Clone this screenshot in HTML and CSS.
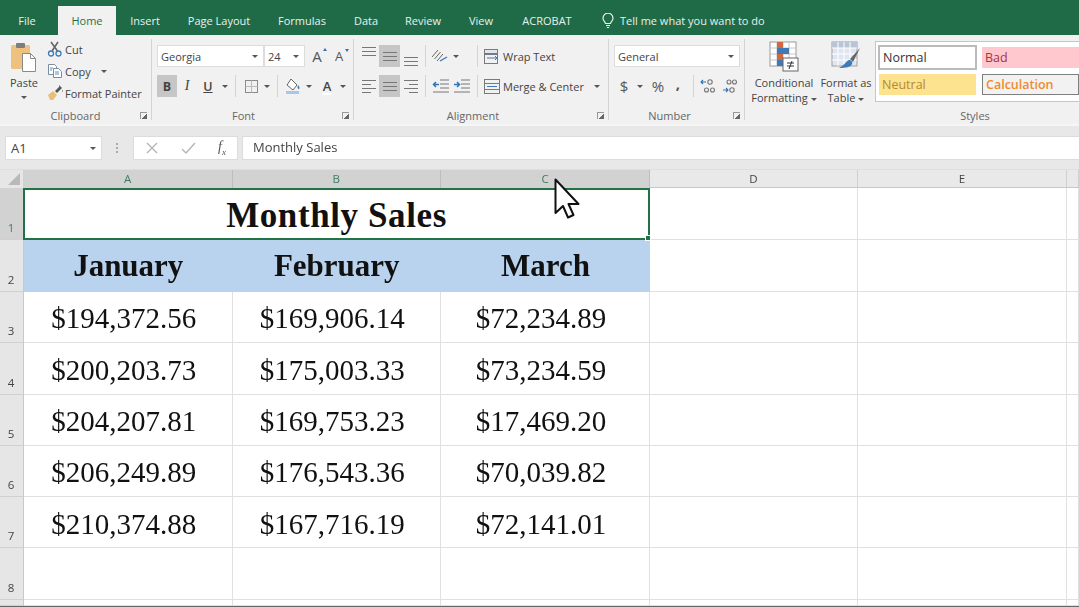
FILE: index.html
```html
<!DOCTYPE html>
<html>
<head>
<meta charset="UTF-8">
<title>Monthly Sales</title>
<link rel="stylesheet" href="styles.css">
</head>
<body>

<div class="tabs">
  <span class="tab t-file">File</span>
  <span class="tab t-home active">Home</span>
  <span class="tab t-insert">Insert</span>
  <span class="tab t-layout">Page Layout</span>
  <span class="tab t-formulas">Formulas</span>
  <span class="tab t-data">Data</span>
  <span class="tab t-review">Review</span>
  <span class="tab t-view">View</span>
  <span class="tab t-acrobat">ACROBAT</span>
  <span class="tell">
    <svg width="12" height="16" viewBox="0 0 12 16" fill="none" stroke="#e8f1ec" stroke-width="1.2"><path d="M3.6 10.5C3.2 8.8 1 7.8 1 5.2a5 5 0 0 1 10 0c0 2.6-2.2 3.6-2.6 5.3z"/><path d="M4 12.5h4M4.8 14.5h2.4"/></svg>
    Tell me what you want to do
  </span>
</div>

<div class="ribbon">

  <div class="group g-clip">
    <div class="clip-body">
      <div class="paste">
        <svg width="26" height="30" viewBox="0 0 26 30">
          <rect x="0" y="3" width="19" height="24" rx="1.5" fill="#eec27e"/>
          <rect x="5" y="1" width="9" height="5" rx="1" fill="#7d7d7d"/>
          <path d="M11.5 11.5h8l5 5v13h-13z" fill="#fff" stroke="#8a8a8a"/>
          <path d="M19.5 11.5v5h5" fill="none" stroke="#8a8a8a"/>
        </svg>
        <span class="paste-text">Paste</span>
        <i class="caret"></i>
      </div>
      <div class="clip-rows">
        <div class="clip-row">
          <svg width="16" height="16" viewBox="0 0 16 16" fill="none"><path d="M4 1l6.5 9M11 1L5 10" stroke="#666" stroke-width="1.6"/><circle cx="4" cy="12.5" r="2.5" stroke="#3f79b8" stroke-width="1.3"/><circle cx="11.5" cy="12.5" r="2.5" stroke="#3f79b8" stroke-width="1.3"/></svg>
          <span>Cut</span>
        </div>
        <div class="clip-row">
          <svg width="16" height="16" viewBox="0 0 16 16" fill="#fff" stroke="#7c8b9c"><path d="M1.5 1.5h6l2 2v8h-8z"/><path d="M6.5 5.5h5l3 3v6h-8z"/><path d="M3 5h3M3 7h2M8 9h4M8 11h4" stroke="#5a8cc2"/></svg>
          <span>Copy</span>
          <i class="caret copy-caret"></i>
        </div>
        <div class="clip-row">
          <svg width="16" height="16" viewBox="0 0 16 16"><path d="M1 10l5-4 4 4-4 5H3z" fill="#ecbd77"/><path d="M8 6l5-5 2 2-5 5z" fill="#555"/><path d="M12 0l1 1-1 1zM15 5l1 1-1 1z" fill="#555"/></svg>
          <span>Format Painter</span>
        </div>
      </div>
    </div>
    <div class="group-label">Clipboard<i class="launcher"></i></div>
  </div>

  <div class="group g-font">
    <div class="group-body">
      <div class="row">
        <div class="combo font-combo">Georgia<i class="caret"></i></div>
        <div class="combo size-combo">24<i class="caret"></i></div>
        <span class="grow-a big">A<i class="tick"></i></span>
        <span class="grow-a small">A<i class="tick down"></i></span>
      </div>
      <div class="row row2">
        <span class="btn on w20 f-b">B</span>
        <span class="btn w20 f-i">I</span>
        <span class="btn w22 f-u">U</span>
        <span class="btn w12"><i class="caret"></i></span>
        <span class="sep s-a"></span>
        <span class="btn w20 ml5">
          <svg width="15" height="15" viewBox="0 0 15 15" fill="none" stroke="#8a8a8a"><rect x="1.5" y="1.5" width="12" height="12"/><path d="M7.5 1.5v12M1.5 7.5h12" stroke="#bbb"/></svg>
        </span>
        <span class="btn w12"><i class="caret"></i></span>
        <span class="sep s-a"></span>
        <span class="btn w20 ml5">
          <svg width="17" height="17" viewBox="0 0 17 17"><path d="M6 1l6 6-4 5-6-5z" fill="#fff" stroke="#666"/><path d="M13 7c1.5 2 2 3 1 4-1 .5-2-1-1-4z" fill="#3f79b8"/><rect x="1" y="13" width="13" height="3" fill="#a9c8e8"/></svg>
        </span>
        <span class="btn w12"><i class="caret"></i></span>
        <span class="btn w20 f-color ml2">A</span>
        <span class="btn w12"><i class="caret"></i></span>
      </div>
    </div>
    <div class="group-label">Font<i class="launcher"></i></div>
  </div>

  <div class="group g-align">
    <div class="group-body">
      <div class="row">
        <span class="btn w21"><i class="lines l-top"></i></span>
        <span class="btn w21 on"><i class="lines"></i></span>
        <span class="btn w21"><i class="lines l-bottom"></i></span>
        <span class="sep s-b"></span>
        <span class="btn w20">
          <svg width="18" height="16" viewBox="0 0 18 16" fill="none" stroke="#666"><path d="M1 9l6-7M3.5 11l6-7M6 13l6-7"/><path d="M9 13l7-4" stroke="#3f79b8" stroke-width="1.4"/></svg>
        </span>
        <span class="btn w12"><i class="caret"></i></span>
        <span class="sep s-c"></span>
        <span class="wide-btn">
          <svg width="18" height="17" viewBox="0 0 18 17" fill="none" stroke="#7a7a7a"><rect x="1.5" y="1.5" width="13" height="4" fill="#dfe7f0"/><rect x="1.5" y="6.5" width="13" height="9"/><path d="M4 10h10l-2-2M12 12l2-2" stroke="#3f79b8"/></svg>
          Wrap Text
        </span>
      </div>
      <div class="row row2">
        <span class="btn w21"><i class="lines h-left"></i></span>
        <span class="btn w21 on"><i class="lines"></i></span>
        <span class="btn w21"><i class="lines h-right"></i></span>
        <span class="sep s-b"></span>
        <span class="btn w21">
          <svg width="18" height="14" viewBox="0 0 18 14" fill="none" stroke="#777"><path d="M8 1h9M8 5h9M8 9h9M1 13h16"/><path d="M7 5.5H1.5M4 3L1.5 5.5 4 8" stroke="#2e75b6" stroke-width="1.5"/></svg>
        </span>
        <span class="btn w21">
          <svg width="18" height="14" viewBox="0 0 18 14" fill="none" stroke="#777"><path d="M8 1h9M8 5h9M8 9h9M1 13h16"/><path d="M1 5.5h5.5M4 3l2.5 2.5L4 8" stroke="#2e75b6" stroke-width="1.5"/></svg>
        </span>
        <span class="sep s-d"></span>
        <span class="wide-btn">
          <svg width="18" height="17" viewBox="0 0 18 17" fill="none" stroke="#7a7a7a"><rect x="1.5" y="1.5" width="15" height="14"/><path d="M1.5 5.5h15M1.5 11.5h15"/><path d="M4 8.5h10" stroke="#3f79b8"/></svg>
          Merge &amp; Center
          <i class="caret merge-caret"></i>
        </span>
      </div>
    </div>
    <div class="group-label">Alignment<i class="launcher"></i></div>
  </div>

  <div class="group g-number">
    <div class="group-body">
      <div class="row">
        <div class="combo number-combo">General<i class="caret"></i></div>
      </div>
      <div class="row row2">
        <span class="btn w20 sym">$</span>
        <span class="btn w12"><i class="caret"></i></span>
        <span class="btn w24 sym">%</span>
        <span class="btn w16 sym comma">,</span>
        <span class="sep s-e"></span>
        <span class="btn w21 ml4">
          <svg width="17" height="16" viewBox="0 0 17 16" fill="none" stroke="#777" stroke-width="1.1"><circle cx="10" cy="4" r="2.2"/><circle cx="6.5" cy="12" r="2"/><circle cx="12.5" cy="12" r="2"/><path d="M6 4H1M3 2L1 4l2 2" stroke="#2e75b6"/></svg>
        </span>
        <span class="btn w21">
          <svg width="17" height="16" viewBox="0 0 17 16" fill="none" stroke="#777" stroke-width="1.1"><circle cx="8" cy="4" r="2"/><circle cx="13.5" cy="4" r="2"/><circle cx="11" cy="12" r="2.2"/><path d="M2 12h5M5 10l2 2-2 2" stroke="#2e75b6"/></svg>
        </span>
      </div>
    </div>
    <div class="group-label">Number<i class="launcher"></i></div>
  </div>

  <div class="group g-styles">
    <div class="styles-body">
      <div class="big-btn cond">
        <svg width="30" height="31" viewBox="0 0 30 31">
          <rect x="1" y="1" width="26" height="24" fill="#fff" stroke="#9a9a9a"/>
          <path d="M8 1v24M14 1v24M20 1v24M1 7h26M1 13h26M1 19h26" stroke="#c6c6c6"/>
          <rect x="8" y="1" width="6" height="6" fill="#d4683c"/>
          <rect x="8" y="7" width="12" height="6" fill="#3f79b8"/>
          <rect x="8" y="13" width="6" height="6" fill="#d4683c"/>
          <rect x="8" y="19" width="6" height="6" fill="#3f79b8"/>
          <rect x="14" y="17" width="15" height="13" fill="#fff" stroke="#666"/>
          <path d="M18 22h7M18 25h7M23 20l-3 8" stroke="#333"/>
        </svg>
        <span>Conditional</span>
        <span>Formatting<i class="caret inline"></i></span>
      </div>
      <div class="big-btn table">
        <svg width="30" height="31" viewBox="0 0 30 31">
          <rect x="1" y="1" width="25" height="24" fill="#dfe6f1" stroke="#a0a0a0"/>
          <rect x="1" y="1" width="25" height="6" fill="#b9c4d4"/>
          <path d="M7 1v24M13 1v24M19 1v24M1 7h25M1 13h25M1 19h25" stroke="#fff"/>
          <path d="M29 7l-10 11 3 3z" fill="#666"/>
          <path d="M18 19c2 0 4 2 3 4-1 3-6 4-13 4 5-2 7-7 10-8z" fill="#3f79b8"/>
        </svg>
        <span>Format as</span>
        <span>Table<i class="caret inline"></i></span>
      </div>
      <div class="gallery">
        <div class="style-cell s-normal">Normal</div>
        <div class="style-cell s-bad">Bad</div>
        <div class="style-cell s-neutral">Neutral</div>
        <div class="style-cell s-calc">Calculation</div>
      </div>
    </div>
    <div class="group-label">Styles</div>
  </div>
</div>

<div class="formula-bar">
  <div class="name-box">A1<i class="caret"></i></div>
  <div class="dots"></div>
  <div class="fx-box">
    <svg width="14" height="14" viewBox="0 0 14 14" fill="none" stroke="#b5b5b5" stroke-width="1.4"><path d="M2 2l10 10M12 2L2 12"/></svg>
    <svg width="15" height="14" viewBox="0 0 15 14" fill="none" stroke="#b5b5b5" stroke-width="1.4"><path d="M1 8l4 4 9-10"/></svg>
    <span class="fx">f<sub>x</sub></span>
  </div>
  <div class="formula-input">Monthly Sales</div>
</div>

<div class="sheet">
  <div class="corner"><i></i></div>
  <div class="col-head sel">A</div>
  <div class="col-head sel">B</div>
  <div class="col-head sel">C</div>
  <div class="col-head">D</div>
  <div class="col-head">E</div>
  <div class="col-head"></div>

  <div class="row-head sel">1</div>
  <div class="cell title">Monthly Sales<i class="handle"></i></div>
  <div class="cell"></div><div class="cell"></div><div class="cell"></div>

  <div class="row-head">2</div>
  <div class="cell month">January</div>
  <div class="cell month">February</div>
  <div class="cell month">March</div>
  <div class="cell"></div><div class="cell"></div><div class="cell"></div>

  <div class="row-head">3</div>
  <div class="cell num">$194,372.56</div>
  <div class="cell num">$169,906.14</div>
  <div class="cell num">$72,234.89</div>
  <div class="cell"></div><div class="cell"></div><div class="cell"></div>

  <div class="row-head">4</div>
  <div class="cell num">$200,203.73</div>
  <div class="cell num">$175,003.33</div>
  <div class="cell num">$73,234.59</div>
  <div class="cell"></div><div class="cell"></div><div class="cell"></div>

  <div class="row-head">5</div>
  <div class="cell num">$204,207.81</div>
  <div class="cell num">$169,753.23</div>
  <div class="cell num">$17,469.20</div>
  <div class="cell"></div><div class="cell"></div><div class="cell"></div>

  <div class="row-head">6</div>
  <div class="cell num">$206,249.89</div>
  <div class="cell num">$176,543.36</div>
  <div class="cell num">$70,039.82</div>
  <div class="cell"></div><div class="cell"></div><div class="cell"></div>

  <div class="row-head">7</div>
  <div class="cell num">$210,374.88</div>
  <div class="cell num">$167,716.19</div>
  <div class="cell num">$72,141.01</div>
  <div class="cell"></div><div class="cell"></div><div class="cell"></div>

  <div class="row-head">8</div>
  <div class="cell"></div><div class="cell"></div><div class="cell"></div>
  <div class="cell"></div><div class="cell"></div><div class="cell"></div>

  <div class="row-head"></div>
  <div class="cell"></div><div class="cell"></div><div class="cell"></div>
  <div class="cell"></div><div class="cell"></div><div class="cell"></div>
</div>
<div class="sheet-end"></div>

<svg class="pointer" width="26" height="42" viewBox="0 0 26 42">
  <path d="M1.5 1.5V35l7.5-7 5 11.5 5.5-2.5-5-11h10z" fill="#fff" stroke="#111" stroke-width="2" stroke-linejoin="round"/>
</svg>

</body>
</html>
```

FILE: styles.css
```css
* {
  box-sizing: border-box;
}

html, body {
  margin: 0;
  height: 100%;
  overflow: hidden;
}

body {
  position: relative;
  width: 1079px;
  height: 607px;
  background: #fff;
  font-family: "Open Sans", "Noto Sans", sans-serif;
  font-size: 11px;
  color: #444;
  filter: blur(0.4px);
}

/* tabs */
.tabs {
  display: flex;
  align-items: flex-end;
  height: 35px;
  background: #1f6b48;
  color: #e8f1ec;
  font-size: 11px;
}

.tab {
  display: flex;
  align-items: center;
  justify-content: center;
  height: 29px;
  padding-bottom: 1px;
}

.tab.active {
  background: #f1f1f1;
  color: #217346;
}

.t-file { width: 58px; padding-right: 4px; }
.t-home { width: 58px; }
.t-insert { width: 58px; }
.t-layout { width: 90px; }
.t-formulas { width: 76px; }
.t-data { width: 52px; }
.t-review { width: 62px; }
.t-view { width: 54px; }
.t-acrobat { width: 78px; }

.tell {
  display: flex;
  align-items: center;
  gap: 6px;
  height: 29px;
  margin-left: 16px;
  white-space: nowrap;
}

/* ribbon */
.ribbon {
  display: flex;
  height: 89px;
  padding: 4px 0;
  background: #f1f1f1;
}

.group {
  display: flex;
  flex-direction: column;
  border-right: 1px solid #d4d4d4;
}

.g-clip { width: 152px; }
.g-font { width: 202px; }
.g-align { width: 255px; }
.g-number { width: 136px; }
.g-styles { flex: 1; border-right: none; }

.group-body {
  flex: 1;
  min-height: 0;
  padding: 6px 0 0 5px;
}

.g-align .group-body { padding-left: 4px; }

.group-label {
  position: relative;
  flex: none;
  height: 16px;
  margin-bottom: -4px;
  line-height: 16px;
  text-align: center;
  font-size: 11px;
  color: #666;
}

.g-font .group-label { padding-right: 18px; }
.g-align .group-label { padding-right: 16px; }
.g-number .group-label { padding-right: 14px; }
.g-styles .group-label { padding-left: 126px; }

.launcher {
  position: absolute;
  right: 4px;
  top: 4px;
  width: 7px;
  height: 7px;
  border-left: 1px solid #999;
  border-top: 1px solid #999;
  background: linear-gradient(135deg, transparent 55%, #666 55%);
}

.row {
  display: flex;
  align-items: center;
  height: 22px;
}

.row2 {
  margin-top: 8px;
}

.btn {
  display: flex;
  flex: none;
  align-items: center;
  justify-content: center;
  height: 22px;
}

.btn.on {
  background: #c6c6c6;
}

.w12 { width: 12px; }
.w16 { width: 16px; }
.w20 { width: 20px; }
.w21 { width: 21px; }
.w22 { width: 22px; }
.w24 { width: 24px; }
.ml2 { margin-left: 2px; }
.ml4 { margin-left: 4px; }
.ml5 { margin-left: 5px; }

.sep {
  flex: none;
  width: 1px;
  height: 22px;
  background: #d4d4d4;
}

.s-a { margin-left: 4px; }
.s-b { margin: 0 4px; }
.s-c { margin: 0 5px 0 15px; }
.s-d { margin: 0 5px 0 5px; }
.s-e { margin-left: 7px; }

.caret {
  display: inline-block;
  width: 0;
  height: 0;
  border-left: 3px solid transparent;
  border-right: 3px solid transparent;
  border-top: 3px solid #555;
}

.caret.inline {
  margin-left: 3px;
  vertical-align: middle;
}

.combo {
  display: flex;
  align-items: center;
  justify-content: space-between;
  height: 22px;
  padding: 0 5px 0 3px;
  background: #fff;
  border: 1px solid #dcdcdc;
}

.font-combo { width: 107px; }
.size-combo { width: 41px; }
.number-combo { width: 126px; }

.grow-a {
  position: relative;
  font-size: 15px;
  color: #555;
  text-align: center;
}

.grow-a.big { width: 22px; margin-left: 1px; }
.grow-a.small { width: 22px; font-size: 13px; }

.tick {
  position: absolute;
  top: 2px;
  right: 1px;
  width: 0;
  height: 0;
  border-left: 2px solid transparent;
  border-right: 2px solid transparent;
  border-bottom: 3px solid #2e75b6;
}

.tick.down {
  border-bottom: none;
  border-top: 3px solid #2e75b6;
}

.f-b { font-weight: 700; font-size: 12.5px; color: #444; }
.f-i { font-style: italic; font-family: "Liberation Serif", serif; font-size: 14px; }
.f-u { text-decoration: underline; font-weight: 600; font-size: 12.5px; }
.f-color { font-weight: 600; font-size: 13px; text-decoration: underline 2px #fff; text-underline-offset: 2px; }

.lines {
  display: block;
  width: 14px;
  height: 9px;
  background: repeating-linear-gradient(#777 0 1px, transparent 1px 4px);
}

.l-top { transform: translateY(-5px); }
.l-bottom { transform: translateY(5px); }

.h-left, .h-right {
  height: 13px;
  background:
    linear-gradient(#777 0 1px, transparent 1px) 0 0 / 14px 4px no-repeat,
    linear-gradient(#777 0 1px, transparent 1px) 0 4px / 9px 4px no-repeat,
    linear-gradient(#777 0 1px, transparent 1px) 0 8px / 14px 4px no-repeat,
    linear-gradient(#777 0 1px, transparent 1px) 0 12px / 9px 1px no-repeat;
}

.h-right {
  transform: scaleX(-1);
}

.wide-btn {
  display: flex;
  flex: none;
  align-items: center;
  gap: 2px;
  white-space: nowrap;
}

.merge-caret {
  margin-left: 8px;
}

.sym {
  font-size: 15px;
  color: #555;
}

.comma {
  padding-bottom: 6px;
  font-weight: 700;
}

/* clipboard */
.clip-body {
  display: flex;
  flex: 1;
  min-height: 0;
  padding-left: 8px;
}

.paste {
  display: flex;
  flex-direction: column;
  align-items: center;
  width: 32px;
  padding-top: 3px;
}

.paste-text {
  margin-top: 3px;
  line-height: 16px;
}

.paste .caret {
  margin-top: 5px;
}

.clip-rows {
  margin: -1px 0 0 7px;
}

.clip-row {
  display: flex;
  align-items: center;
  gap: 2px;
  height: 22px;
  white-space: nowrap;
}

.copy-caret {
  margin-left: 8px;
}

/* styles gallery */
.styles-body {
  display: flex;
  flex: 1;
  min-height: 0;
  padding-top: 2px;
}

.big-btn {
  display: flex;
  flex-direction: column;
  align-items: center;
  flex: none;
  width: 62px;
  line-height: 15px;
  white-space: nowrap;
}

.big-btn svg {
  flex: none;
  margin-bottom: 3px;
}

.cond { margin-left: 8px; }

.gallery {
  display: grid;
  grid-template-columns: 99px 97px;
  grid-template-rows: 25px 25px;
  gap: 3px 5px;
  flex: 1;
  height: 61px;
  margin-left: -2px;
  padding: 3px 0 3px 2px;
  background: #fff;
  border: 1px solid #c6c6c6;
  border-right: none;
  font-size: 12.5px;
}

.style-cell {
  display: flex;
  align-items: center;
  padding-left: 3px;
}

.s-normal { background: #fff; color: #333; border: 2px solid #bbb; }
.s-bad { margin: 2px 0; background: #ffc7ce; color: #a5343f; }
.s-neutral { margin: 1px 1px 3px; background: #fde28f; color: #b58a2e; }
.s-calc { margin: 1px 0 3px; background: #f2f2f2; color: #ef8b2c; border: 1px solid #7f7f7f; font-weight: 600; }

/* formula bar */
.formula-bar {
  display: flex;
  align-items: center;
  height: 46px;
  padding: 0 0 0 5px;
  background: #e8e8e8;
  border-top: 2px solid #f6f6f6;
  box-shadow: inset 0 -1px 0 #dedede;
}

.name-box, .fx-box, .formula-input {
  height: 24px;
  background: #fff;
  border: 1px solid #dcdcdc;
  font-size: 13px;
}

.name-box {
  display: flex;
  align-items: center;
  justify-content: space-between;
  width: 97px;
  padding: 0 5px;
}

.dots {
  width: 2px;
  height: 10px;
  margin: 0 15px 0 14px;
  background: repeating-linear-gradient(#aaa 0 2px, transparent 2px 4px);
}

.fx-box {
  display: flex;
  align-items: center;
  justify-content: space-between;
  width: 105px;
  padding: 0 11px;
}

.fx {
  font-family: "Liberation Serif", serif;
  font-style: italic;
  font-size: 14px;
  color: #555;
}

.fx sub {
  font-size: 9px;
}

.formula-input {
  flex: 1;
  margin-left: 4px;
  padding-left: 10px;
  line-height: 20px;
  border-right: none;
}

/* sheet */
.sheet {
  display: grid;
  grid-template-columns: 24px 208.5px 208.5px 209px 208px 209px 12px;
  grid-template-rows: 18px 52px 51.5px 51.5px 51.5px 51px 51.5px 51px 51.5px 6px;
}

.sheet-end {
  height: 2px;
  background: #666;
}

.corner {
  position: relative;
  background: #e6e6e6;
  border-right: 1px solid #d0d0d0;
}

.corner i {
  position: absolute;
  right: 3px;
  bottom: 3px;
  width: 0;
  height: 0;
  border-left: 12px solid transparent;
  border-bottom: 12px solid #b9b9b9;
}

.col-head {
  text-align: center;
  line-height: 18px;
  font-size: 11.5px;
  background: #e9e9e9;
  border-right: 1px solid #d0d0d0;
  border-bottom: 1px solid #c8c8c8;
}

.col-head.sel {
  background: #d2d2d2;
  color: #3f7d5e;
  border-right: 1px solid #bdbdbd;
  border-bottom: none;
}

.row-head {
  display: flex;
  align-items: flex-end;
  justify-content: center;
  padding: 0 1px 4px 0;
  background: #e6e6e6;
  border-right: 1px solid #c8c8c8;
  border-bottom: 1px solid #d0d0d0;
  font-size: 11.5px;
}

.row-head.sel {
  background: #d2d2d2;
  color: #3f7d5e;
}

.cell {
  display: flex;
  align-items: center;
  justify-content: center;
  border-right: 1px solid #e0e0e0;
  border-bottom: 1px solid #e0e0e0;
  font-family: "Liberation Serif", serif;
  color: #111;
}

.title {
  position: relative;
  grid-column: span 3;
  margin-left: -1px;
  padding-top: 3px;
  border: 2px solid #217346;
  font-size: 35px;
  font-weight: 700;
  letter-spacing: 0.6px;
  background: #fff;
}

.handle {
  position: absolute;
  right: -3px;
  bottom: -3px;
  width: 6px;
  height: 6px;
  background: #217346;
  border: 1px solid #fff;
}

.month {
  padding-top: 1px;
  background: #b9d3ee;
  border-right: none;
  border-bottom: none;
  font-size: 31px;
  font-weight: 700;
}

.num {
  padding: 4px 8px 0 0;
  font-size: 29px;
}

.pointer {
  position: absolute;
  left: 554px;
  top: 178px;
}
```
